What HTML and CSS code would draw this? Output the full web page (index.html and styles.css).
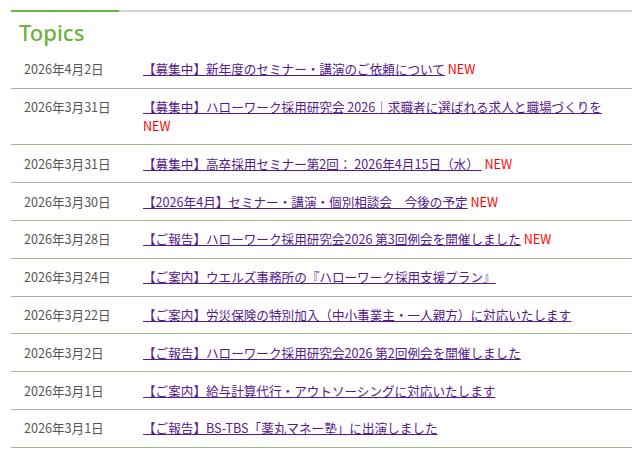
FILE: index.html
```html
<!DOCTYPE html>
<html lang="ja">
<head>
<meta charset="utf-8">
<title>Topics</title>
<link rel="stylesheet" href="styles.css">
</head>
<body>
<section class="topics">
  <h2 class="topics-title">Topics</h2>
  <ul class="topics-list">
    <li class="topic"><span class="topic-date">2026年4月2日</span><span class="topic-body"><a href="#" class="topic-link"> 【募集中】新年度のセミナー・講演のご依頼について</a> <span class="new">NEW</span></span></li>
    <li class="topic"><span class="topic-date">2026年3月31日</span><span class="topic-body"><a href="#" class="topic-link"> 【募集中】ハローワーク採用研究会 2026｜求職者に選ばれる求人と職場づくりを</a> <span class="new">NEW</span></span></li>
    <li class="topic"><span class="topic-date">2026年3月31日</span><span class="topic-body"><a href="#" class="topic-link"> 【募集中】高卒採用セミナー第2回： 2026年4月15日（水）&nbsp;</a> <span class="new">NEW</span></span></li>
    <li class="topic"><span class="topic-date">2026年3月30日</span><span class="topic-body"><a href="#" class="topic-link">【2026年4月】セミナー・講演・個別相談会　今後の予定</a> <span class="new">NEW</span></span></li>
    <li class="topic"><span class="topic-date">2026年3月28日</span><span class="topic-body"><a href="#" class="topic-link"> 【ご報告】ハローワーク採用研究会2026 第3回例会を開催しました</a> <span class="new">NEW</span></span></li>
    <li class="topic"><span class="topic-date">2026年3月24日</span><span class="topic-body"><a href="#" class="topic-link"> 【ご案内】ウエルズ事務所の『ハローワーク採用支援プラン』</a></span></li>
    <li class="topic"><span class="topic-date">2026年3月22日</span><span class="topic-body"><a href="#" class="topic-link"> 【ご案内】労災保険の特別加入（中小事業主・一人親方）に対応いたします</a></span></li>
    <li class="topic"><span class="topic-date">2026年3月2日</span><span class="topic-body"><a href="#" class="topic-link"> 【ご報告】ハローワーク採用研究会2026 第2回例会を開催しました</a></span></li>
    <li class="topic"><span class="topic-date">2026年3月1日</span><span class="topic-body"><a href="#" class="topic-link"> 【ご案内】給与計算代行・アウトソーシングに対応いたします</a></span></li>
    <li class="topic"><span class="topic-date">2026年3月1日</span><span class="topic-body"><a href="#" class="topic-link"> 【ご報告】BS-TBS「薬丸マネー塾」に出演しました</a></span></li>
  </ul>
</section>
</body>
</html>
```
FILE: styles.css
```css
html, body {
  margin: 0;
  padding: 0;
  background: #fff;
}

body {
  font-family: "Noto Sans CJK JP", "Noto Sans", sans-serif;
  color: #555;
}

.topics {
  margin: 10px 9px 0 11px;
}

.topics-title {
  margin: 0;
  border-top: 2px solid #d3d3d3;
  padding: 0 0 4px 8px;
  font-family: "Noto Sans", "Noto Sans CJK JP", sans-serif;
  font-weight: 500;
  font-size: 22px;
  line-height: 30px;
  color: #6ab43e;
}

.topics-title::before {
  content: "";
  display: block;
  width: 108px;
  height: 2px;
  margin: -2px 0 5px -8px;
  background: #6ab43e;
}

.topics-list {
  list-style: none;
  margin: 0;
  padding: 0;
}

.topic {
  display: flex;
  font-size: 12.6px;
  line-height: 18.9px;
  padding: 9.45px 0 8.45px;
  border-bottom: 1px solid #a5b890;
}

.topic-date {
  flex: 0 0 132px;
  box-sizing: border-box;
  padding-left: 13px;
  color: #555;
}

.topic-body {
  flex: 1 1 auto;
  min-width: 0;
}

.topic-link {
  color: #551a8b;
  text-decoration: underline;
}

.new {
  color: #f00;
}
```
